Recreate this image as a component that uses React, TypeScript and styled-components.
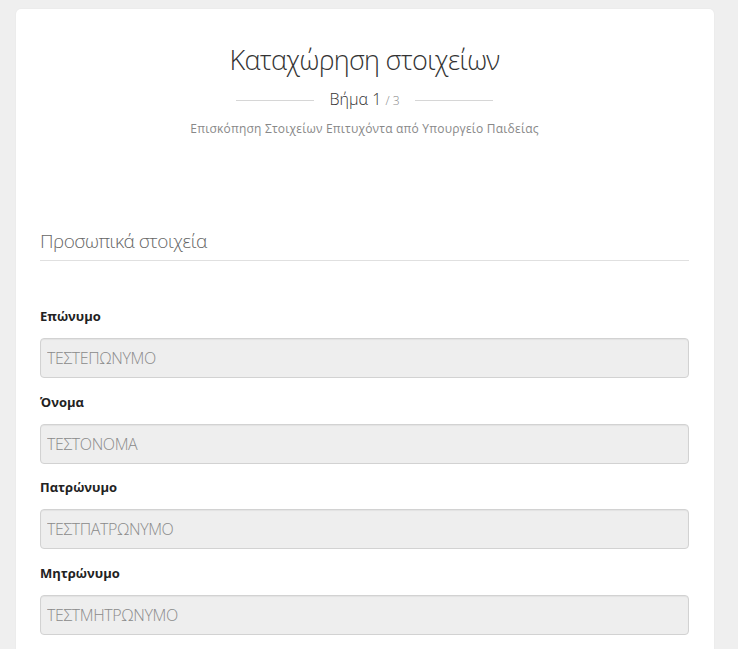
import styled, { createGlobalStyle } from 'styled-components';

const GlobalStyle = createGlobalStyle`
  html, body {
    margin: 0;
    padding: 0;
    background: #efefef;
    font-family: 'Open Sans', 'Noto Sans', sans-serif;
  }
`;

const FIELDS = [
  { label: 'Επώνυμο', value: 'ΤΕΣΤΕΠΩΝΥΜΟ' },
  { label: 'Όνομα', value: 'ΤΕΣΤΟΝΟΜΑ' },
  { label: 'Πατρώνυμο', value: 'ΤΕΣΤΠΑΤΡΩΝΥΜΟ' },
  { label: 'Μητρώνυμο', value: 'ΤΕΣΤΜΗΤΡΩΝΥΜΟ' },
];

const App = () => {
  return (
    <>
      <GlobalStyle />
      <Card>
        <Header>
          <Title>Καταχώρηση στοιχείων</Title>
          <StepRow>
            <StepLine />
            <StepText>
              Βήμα 1 <small>/ 3</small>
            </StepText>
            <StepLine />
          </StepRow>
          <Subtitle>Επισκόπηση Στοιχείων Επιτυχόντα από Υπουργείο Παιδείας</Subtitle>
        </Header>
        <SectionTitle>Προσωπικά στοιχεία</SectionTitle>
        <Fields>
          {FIELDS.map((f) => (
            <Field key={f.label}>
              <Label>{f.label}</Label>
              <Input type="text" value={f.value} readOnly disabled />
            </Field>
          ))}
        </Fields>
      </Card>
    </>
  );
};

export default App;

const Card = styled.div`
  margin: 9px 24px 0 16px;
  background: #fff;
  border-radius: 5px;
  padding: 33px 25px 40px 24px;
  box-shadow: 0 0 2px rgba(0, 0, 0, 0.06);
`;

const Header = styled.div`
  display: flex;
  flex-direction: column;
  align-items: center;
`;

const Title = styled.h1`
  margin: 0;
  font-size: 27px;
  line-height: 36px;
  font-weight: 300;
  color: #333;
  letter-spacing: -0.7px;
`;

const StepRow = styled.div`
  display: flex;
  align-items: center;
  gap: 16px;
  margin-top: 10px;
`;

const StepLine = styled.span`
  width: 78px;
  height: 1px;
  background: #d6d6d6;
`;

const StepText = styled.div`
  font-size: 16px;
  line-height: 22px;
  font-weight: 300;
  color: #333;
  small {
    font-size: 12px;
    color: #888;
  }
`;

const Subtitle = styled.div`
  margin-top: 8px;
  font-size: 12px;
  line-height: 17px;
  color: #888;
  font-weight: 400;
  letter-spacing: 0.2px;
`;

const SectionTitle = styled.h2`
  margin: 91px 0 0;
  padding-bottom: 6px;
  font-size: 19px;
  line-height: 26px;
  font-weight: 300;
  color: #666;
  letter-spacing: -0.5px;
  border-bottom: 1px solid #e0e0e0;
`;

const Fields = styled.div`
  display: flex;
  flex-direction: column;
  gap: 14.7px;
  margin-top: 46px;
`;

const Field = styled.div`
  display: flex;
  flex-direction: column;
  gap: 13px;
`;

const Label = styled.label`
  font-size: 13px;
  line-height: 18px;
  font-weight: 700;
  color: #222;
`;

const Input = styled.input`
  box-sizing: border-box;
  width: 100%;
  height: 40px;
  padding: 0 6px;
  border: 1px solid #d2d2d2;
  border-radius: 4px;
  background: #eee;
  box-shadow: inset 0 1px 1px rgba(0, 0, 0, 0.05);
  font-family: 'Open Sans', 'Noto Sans', sans-serif;
  font-size: 16px;
  font-weight: 300;
  color: #8a8a8a;
  -webkit-text-fill-color: #8a8a8a;
  opacity: 1;
  letter-spacing: -0.4px;
`;
